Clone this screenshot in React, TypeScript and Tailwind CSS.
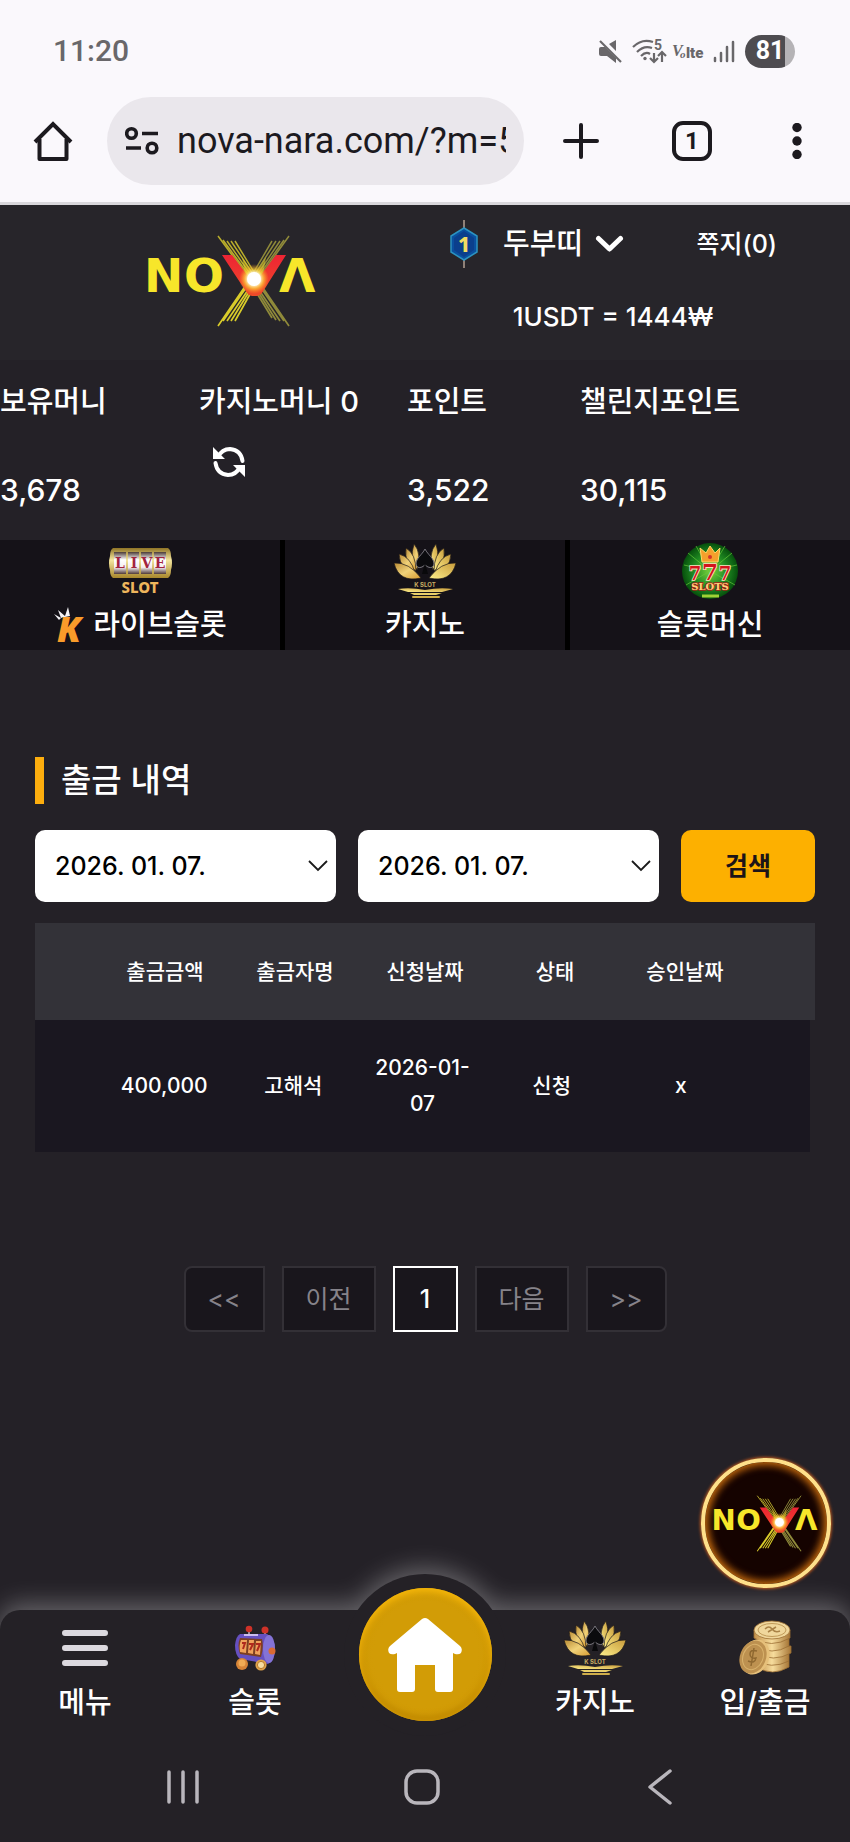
import { ReactNode } from 'react';

const pages = [
  { label: '<<', name: '처음', className: 'w-[81px] rounded-l-lg border-[#333036] text-[#86838a]' },
  { label: '이전', name: '이전', className: 'w-[94px] border-[#333036] text-[#86838a]' },
  { label: '1', name: '1', className: 'w-[65px] border-white text-white font-medium' },
  { label: '다음', name: '다음', className: 'w-[94px] border-[#333036] text-[#86838a]' },
  { label: '>>', name: '마지막', className: 'w-[81px] rounded-r-lg border-[#333036] text-[#86838a]' },
];

const columns = ['출금금액', '출금자명', '신청날짜', '상태', '승인날짜'];
const rows = [['400,000', '고해석', '2026-01-07', '신청', 'x']];

const NovaLogo = ({ className }: { className: string }) => (
  <svg className={`overflow-visible ${className}`} viewBox="0 0 170 92" role="img" aria-label="NOVA">
    <defs>
      <radialGradient id="flare">
        <stop offset="0" stopColor="#fff" />
        <stop offset="0.4" stopColor="#fffbd8" />
        <stop offset="0.65" stopColor="#ffd23a" stopOpacity="0.7" />
        <stop offset="1" stopColor="#ff9a1f" stopOpacity="0" />
      </radialGradient>
      <linearGradient id="red" x1="0" y1="0" x2="0" y2="1">
        <stop offset="0" stopColor="#ee2434" />
        <stop offset="1" stopColor="#ee4b28" />
      </linearGradient>
    </defs>
    <g fill="#f7e62a" fontFamily="DejaVu Sans" fontWeight="700" fontSize="47">
      <text x="-4" y="57">N</text>
      <text x="36" y="57">O</text>
      <text x="131" y="57">Λ</text>
    </g>
    <g stroke="#b9ad2b" strokeWidth="1.5" fill="none">
      <path d="M70 1 101 43M75 5 103 43M79 6 105 43M83 6 107 42M87 6 109 42" />
      <path d="M141 1 111 43M136 5 109 43M132 6 107 43M128 6 105 42M124 6 103 42" stroke="#8f8a3a" />
    </g>
    <g stroke="#d9cc2a" strokeWidth="1.7" fill="none">
      <path d="M70 91 98 50M75 86 100 50M79 86 102 52M83 86 104 52M87 86 106 52" />
      <path d="M141 91 113 50M136 86 111 50M132 86 109 52M128 85 107 52M124 83 105 52" stroke="#8f8a3a" />
    </g>
    <path d="M94 22 106 40 118 22 113 50H99Z" fill="#e8cf2a" opacity="0.55" />
    <path d="M74 20H84L106 49 128 20H138L114 58Q112 61 109 61H104Q101 61 99 58Z" fill="url(#red)" />
    <circle cx="106" cy="44" r="15" fill="url(#flare)" />
    <circle cx="106" cy="44" r="7" fill="#fff" />
  </svg>
);

const LotusIcon = ({ className }: { className: string }) => (
  <svg className={className} viewBox="0 0 62 56" aria-hidden="true">
    <defs>
      <linearGradient id="gold" x1="0" y1="0" x2="1" y2="1">
        <stop offset="0" stopColor="#b98a33" />
        <stop offset="0.5" stopColor="#f0d27a" />
        <stop offset="1" stopColor="#d79a2f" />
      </linearGradient>
      <linearGradient id="gold2" x1="0" y1="1" x2="1" y2="0">
        <stop offset="0" stopColor="#fff08c" />
        <stop offset="1" stopColor="#c79b3a" />
      </linearGradient>
    </defs>
    <g fill="url(#gold)" stroke="#1c1818" strokeWidth="0.7">
      <path d="M20 1Q28 10 23 27Q15 16 20 1Z" />
      <path d="M12 5Q22 11 22 28Q10 21 12 5Z" />
      <path d="M5 11Q17 14 21 30Q6 27 5 11Z" />
      <path d="M0 20Q15 19 27 35Q5 40 0 20Z" />
    </g>
    <g fill="url(#gold2)" stroke="#1c1818" strokeWidth="0.7">
      <path d="M42 1Q34 10 39 27Q47 16 42 1Z" />
      <path d="M50 5Q40 11 40 28Q52 21 50 5Z" />
      <path d="M57 11Q45 14 41 30Q56 27 57 11Z" />
      <path d="M62 20Q47 19 35 35Q57 40 62 20Z" />
    </g>
    <path d="M31 6C34 12 40 15 40 21Q39 26 34 24L31 22 28 24Q23 26 22 21C22 15 28 12 31 6Z" fill="#0b0b0e" stroke="#77757c" strokeWidth="1" />
    <path d="M31 20 28 31H34Z" fill="#09090b" />
    <text x="31" y="44" textAnchor="middle" fontFamily="Inter" fontWeight="700" fontSize="6" fill="#c9ad63">K SLOT</text>
    <path d="M4 46Q16 44 31 47 46 44 59 46L48 49H14Z" fill="url(#gold2)" />
    <path d="M16 50H48L42 52H20Z" fill="#e8cf6a" />
    <path d="M19 54H45" stroke="#cfae4a" strokeWidth="2" strokeLinecap="round" />
  </svg>
);

const LiveSlotIcon = () => (
  <svg className="h-[46px] w-[63px] overflow-visible" viewBox="0 0 63 46" aria-hidden="true">
    <defs>
      <linearGradient id="frame" x1="0" y1="0" x2="0" y2="1">
        <stop offset="0" stopColor="#8f7425" />
        <stop offset="0.4" stopColor="#f5e7a0" />
        <stop offset="1" stopColor="#a8872c" />
      </linearGradient>
      <linearGradient id="reel" x1="0" y1="0" x2="0" y2="1">
        <stop offset="0" stopColor="#4b3b37" />
        <stop offset="0.35" stopColor="#fff" />
        <stop offset="0.7" stopColor="#f4edf0" />
        <stop offset="1" stopColor="#503a38" />
      </linearGradient>
    </defs>
    <path d="M4 0H59Q62 2 62 8 64 15 62 22 62 28 59 30H4Q1 28 1 22-1 15 1 8 1 2 4 0Z" fill="url(#frame)" />
    <g fill="url(#reel)">
      <rect x="5" y="4" width="12" height="22" />
      <rect x="19" y="4" width="11" height="22" />
      <rect x="32" y="4" width="11" height="22" />
      <rect x="45" y="4" width="12" height="22" />
    </g>
    <g fill="#a3243f" fontFamily="DejaVu Serif" fontWeight="700" fontSize="14" textAnchor="middle">
      <text x="11" y="20">L</text>
      <text x="25" y="20">I</text>
      <text x="38" y="20">V</text>
      <text x="51" y="20">E</text>
    </g>
    <text x="31" y="45" textAnchor="middle" fontFamily="Noto Sans" fontWeight="800" fontSize="15" fill="#eeb55c">SLOT</text>
  </svg>
);

const KMark = () => (
  <svg className="h-9 w-9 overflow-visible" viewBox="0 0 36 36" aria-hidden="true">
    <path d="M1 7 8 11 5 3 12 9 15 0 17 9 12 10Q8 10 6 13Z" fill="#f5f3f6" />
    <text x="4" y="35" fontFamily="Noto Sans" fontStyle="italic" fontWeight="900" fontSize="36" fill="#f99b2a">K</text>
  </svg>
);

const SevensIcon = () => (
  <svg className="h-[57px] w-[57px]" viewBox="0 0 57 57" aria-hidden="true">
    <defs>
      <radialGradient id="green">
        <stop offset="0" stopColor="#7ad23c" />
        <stop offset="0.6" stopColor="#1f8a22" />
        <stop offset="1" stopColor="#064f0c" />
      </radialGradient>
    </defs>
    <circle cx="28" cy="28" r="28" fill="url(#green)" />
    <path d="M28 28 6 10M28 28 2 22M28 28 50 10M28 28 55 22M28 28 4 42M28 28 53 42M28 28 14 3M28 28 43 3" stroke="#64c83a" opacity="0.7" />
    <path d="M18 5 24 10 28 3 33 10 38 5 36 19H20Z" fill="#f5a02c" stroke="#ffd768" />
    <circle cx="28" cy="14" r="2" fill="#d4322a" />
    <g fill="#d2151c" stroke="#ffe4c4" strokeWidth="1.6" paintOrder="stroke" fontFamily="DejaVu Serif" fontWeight="700" textAnchor="middle">
      <text x="13" y="37" fontSize="18">7</text>
      <text x="43" y="37" fontSize="18">7</text>
      <text x="28" y="37" fontSize="23">7</text>
    </g>
    <text x="28" y="47" textAnchor="middle" fontFamily="DejaVu Serif" fontWeight="700" fontSize="10" fill="#ffd27a" stroke="#a3211b" strokeWidth="1.5" paintOrder="stroke">SLOTS</text>
    <path d="M20 53H37" stroke="#9fd136" strokeWidth="3" />
  </svg>
);

const SlotMachineIcon = () => (
  <svg className="h-[46px] w-[42px]" viewBox="0 0 42 46" aria-hidden="true">
    <path d="M15 4V12M31 5V12" stroke="#9a8f9d" strokeWidth="2" />
    <circle cx="15" cy="4" r="3.3" fill="#cf3228" />
    <circle cx="31" cy="5" r="3.5" fill="#cf3228" />
    <path d="M6 9H33Q41 13 41 25 40 37 34 39L6 34Q1 30 1 20 2 11 6 9Z" fill="#6650c0" />
    <ellipse cx="35" cy="24" rx="6" ry="14" fill="#8473d6" />
    <path d="M6 13 28 14Q30 22 27 32L6 29Q3 20 6 13Z" fill="#7d3f22" />
    <g fill="#f0a25c">
      <path d="M7 15H13L12 28 6 27Q5 20 7 15Z" />
      <path d="M15 15H20L19 29 14 28Z" />
      <path d="M22 16H27L26 30 21 29Z" />
    </g>
    <path d="M8 18H11L9 24M15 19H19L16 25M22 19H26L23 26" stroke="#b02a1d" strokeWidth="2" fill="none" />
    <path d="M10 10H24" stroke="#cbbcf0" strokeWidth="2" />
    <circle cx="38" cy="26" r="3.5" fill="#d96a34" />
    <circle cx="8" cy="39" r="6" fill="#d78437" />
    <circle cx="8" cy="38" r="3.5" fill="#f0ab55" />
    <circle cx="27" cy="40" r="5.6" fill="#e0a34a" />
    <circle cx="27" cy="40" r="3.6" fill="#f7dda0" stroke="#b9792b" />
  </svg>
);

const CoinsIcon = () => (
  <svg className="h-14 w-[54px]" viewBox="0 0 54 56" aria-hidden="true">
    <defs>
      <linearGradient id="coin" x1="0" y1="0" x2="1" y2="0">
        <stop offset="0" stopColor="#c4914a" />
        <stop offset="0.5" stopColor="#f6dc9c" />
        <stop offset="1" stopColor="#a87838" />
      </linearGradient>
    </defs>
    <g fill="url(#coin)" stroke="#9c6f33" strokeWidth="0.8">
      <path d="M19 41V47Q34 57 51 47V41Z" />
      <path d="M17 34V40Q33 50 51 41V34Z" />
      <path d="M18 27V33Q35 43 53 33V26Z" />
      <path d="M17 20V26Q34 36 51 26V19Z" />
      <path d="M16 10V18Q33 29 52 18V10Z" />
      <ellipse cx="34" cy="10" rx="18" ry="9" fill="#f0d79c" />
    </g>
    <ellipse cx="34" cy="10" rx="14" ry="6.5" fill="none" stroke="#c09a58" />
    <path d="M27 9Q31 5 34 9T42 11M30 12 38 7" fill="none" stroke="#a98246" strokeWidth="1.5" />
    <ellipse cx="17" cy="37" rx="14" ry="18" transform="rotate(22 17 37)" fill="#e6c07a" />
    <ellipse cx="15" cy="37" rx="13" ry="17" transform="rotate(22 15 37)" fill="#bd9150" />
    <ellipse cx="15" cy="37" rx="10" ry="13" transform="rotate(22 15 37)" fill="none" stroke="#d9b26c" />
    <path d="M19 31Q12 29 12 34T18 38Q17 44 10 41M16 28 13 46" fill="none" stroke="#8f6830" strokeWidth="1.5" />
  </svg>
);

const StatusBar = () => (
  <div className="flex items-center justify-between pt-[33px] pr-[55px] pl-[53px] text-[#69676a]">
    <span className="font-[Roboto] text-[30px] leading-9 font-medium">11:20</span>
    <div className="flex items-center gap-[6px]">
      <svg className="h-6 w-6" viewBox="0 0 24 24" aria-hidden="true">
        <path d="M11 5 18 1V12ZM1 10Q1 8 3 8H7L18 19V24L9 17H3Q1 17 1 15Z" fill="currentColor" />
        <path d="M2 2 23 23" stroke="currentColor" strokeWidth="2.2" />
      </svg>
      <svg className="ml-1 h-6 w-[34px] overflow-visible" viewBox="0 0 34 24" fill="none" stroke="currentColor" strokeWidth="2.2" aria-hidden="true">
        <path d="M1 8Q10-1 21 3M5 13Q12 6 20 9M9 17Q14 12 18 15" />
        <circle cx="13" cy="19.500" r="1.700" fill="currentColor" stroke="none" />
        <path d="M22 14V23M18 19 22 23 26 19M30 23V13M26 17 30 13 34 17" />
        <text x="22" y="11" fontFamily="Roboto" fontWeight="700" fontSize="14" fill="currentColor" stroke="none">5</text>
      </svg>
      <svg className="h-6 w-[34px] overflow-visible" viewBox="0 0 34 24" fill="currentColor" aria-hidden="true">
        <text x="0" y="17" fontFamily="Liberation Serif" fontStyle="italic" fontWeight="700" fontSize="16">V</text>
        <text x="8" y="19" fontFamily="Liberation Serif" fontStyle="italic" fontWeight="700" fontSize="11">o</text>
        <text x="14" y="19" fontFamily="Roboto" fontWeight="900" fontSize="15">lte</text>
      </svg>
      <svg className="h-6 w-6" viewBox="0 0 24 24" stroke="currentColor" strokeWidth="2.500" strokeLinecap="round" aria-hidden="true">
        <path d="M3 19V22M9 14V22M15 8V22M21 3V22" />
      </svg>
      <span className="ml-[3px] flex h-[33px] w-[50px] items-center justify-center rounded-full bg-linear-to-r from-[#4e4c50] from-80% to-[#b5b3b6] to-80% font-[Roboto] text-[25px] leading-8 font-bold text-white">
        81
      </span>
    </div>
  </div>
);

const BrowserBar = () => (
  <div className="flex items-center pt-7 pr-[35px] pb-[17px] pl-[33px] text-[#1c1a1f]">
    <button type="button" aria-label="홈">
      <svg className="h-10 w-10" viewBox="0 0 40 40" fill="none" stroke="currentColor" strokeWidth="4" strokeLinejoin="round" aria-hidden="true">
        <path d="M2 21 20 3 38 21" strokeLinejoin="miter" />
        <path d="M6.500 18V38H33.500V18" />
      </svg>
    </button>
    <div className="ml-[34px] flex h-[88px] flex-1 items-center rounded-full bg-[#eae7ec] px-[18px]">
      <svg className="h-[30px] w-[34px] shrink-0" viewBox="0 0 34 30" fill="none" stroke="currentColor" strokeWidth="3.600" aria-hidden="true">
        <circle cx="6.500" cy="7.500" r="4.800" />
        <path d="M17 7.500H33M1 22H16" />
        <circle cx="27" cy="22" r="4.800" />
      </svg>
      <input
        className="ml-[18px] w-full min-w-0 bg-transparent font-[Roboto] text-[36px] leading-10 outline-none"
        aria-label="주소"
        defaultValue="nova-nara.com/?m=5"
      />
    </div>
    <button type="button" aria-label="새 탭" className="ml-[39px]">
      <svg className="h-9 w-9" viewBox="0 0 36 36" stroke="currentColor" strokeWidth="4" strokeLinecap="round" aria-hidden="true">
        <path d="M18 2V34M2 18H34" />
      </svg>
    </button>
    <button type="button" aria-label="탭 목록" className="ml-[73px] flex size-10 items-center justify-center rounded-[11px] border-4 border-current font-[Roboto] text-[24px] leading-7 font-bold">
      1
    </button>
    <button type="button" aria-label="더보기" className="ml-[67px]">
      <svg className="h-9 w-9" viewBox="0 0 36 36" fill="currentColor" aria-hidden="true">
        <circle cx="18" cy="4.500" r="4.700" />
        <circle cx="18" cy="18" r="4.700" />
        <circle cx="18" cy="31.500" r="4.700" />
      </svg>
    </button>
  </div>
);

const SiteHeader = () => (
  <header className="flex h-[155px] justify-between bg-[#27252a] pr-[73px] pl-[148px]">
    <a href="#home" className="pt-[30px]">
      <NovaLogo className="h-[92px] w-[170px]" />
    </a>
    <div className="flex w-[328px] flex-col items-center gap-[33px] pt-[15px] font-medium">
      <div className="flex w-full items-center">
        <svg className="h-12 w-[30px]" viewBox="0 0 30 48" aria-hidden="true">
          <path d="M15 0V48" stroke="#8f8178" strokeWidth="2" />
          <path d="M15 8 28 16V32L15 40 2 32V16Z" fill="#0a4f9e" stroke="#2c93c0" strokeWidth="1.500" />
          <path d="M15 11 25 18V30L15 37 5 30V18Z" fill="#0b3f8c" />
          <text x="15" y="32" textAnchor="middle" fontFamily="Noto Sans" fontWeight="800" fontSize="21" fill="#f2dc62">1</text>
        </svg>
        <button type="button" className="ml-6 flex items-center gap-3 text-[29px] leading-9">
          두부띠
          <svg className="h-[19px] w-[29px]" viewBox="0 0 29 19" fill="none" stroke="currentColor" strokeWidth="5" strokeLinecap="round" strokeLinejoin="round" aria-hidden="true">
            <path d="M3.500 3.500 14.500 14 25.500 3.500" />
          </svg>
        </button>
        <a href="#messages" className="ml-auto text-[25px] leading-9">쪽지(0)</a>
      </div>
      <p className="text-[26px] leading-8">1USDT = 1444₩</p>
    </div>
  </header>
);

const Stat = ({ label, children }: { label: string; children: ReactNode }) => (
  <div className="whitespace-nowrap">
    <dt className="text-[29px] leading-[44px]">{label}</dt>
    <dd className="text-[30px] leading-9">{children}</dd>
  </div>
);

const Balance = () => (
  <dl className="grid h-[180px] grid-cols-[199fr_208fr_173fr_270fr] pt-5 font-medium">
    <Stat label="보유머니">
      <span className="block pt-12">3,678</span>
    </Stat>
    <Stat label="카지노머니 0">
      <button type="button" aria-label="새로고침" className="ml-[14px] block pt-[22px]">
        <svg className="h-8 w-8" viewBox="0 0 32 32" aria-hidden="true">
          <path d="M5 11Q9 3 17 3 28 4 29.500 15M27 21Q23 29 15 29 4 28 2.500 17" fill="none" stroke="currentColor" strokeWidth="4" strokeLinecap="round" />
          <path d="M0 1V13H12ZM32 31V19H20Z" fill="currentColor" />
        </svg>
      </button>
    </Stat>
    <Stat label="포인트">
      <span className="block pt-12">3,522</span>
    </Stat>
    <Stat label="챌린지포인트">
      <span className="block pt-12">30,115</span>
    </Stat>
  </dl>
);

const GameTab = ({ icon, children }: { icon: ReactNode; children: ReactNode }) => (
  <a href="#game" className="flex flex-col items-center bg-[#151218]">
    <span className="flex h-[62px] items-center">{icon}</span>
    <span className="flex h-12 items-center gap-1 pb-0.5 text-[29px] leading-10 font-medium">{children}</span>
  </a>
);

const DateSelect = ({ label }: { label: string }) => (
  <div className="grid">
    <select
      aria-label={label}
      className="col-start-1 row-start-1 h-[72px] w-full appearance-none rounded-[10px] bg-white px-5 text-[25px] leading-8 font-medium text-black"
    >
      <option>2026. 01. 07.</option>
    </select>
    <svg className="pointer-events-none col-start-1 row-start-1 mr-2 h-3 w-5 self-center justify-self-end" viewBox="0 0 20 12" fill="none" stroke="#1a1a1a" strokeWidth="1.800" aria-hidden="true">
      <path d="M1 1 10 10 19 1" />
    </svg>
  </div>
);

const HistoryTable = () => (
  <table className="mt-[21px] block text-[21px] font-medium">
    <thead className="block">
      <tr className="grid h-[97px] grid-cols-12 items-center bg-[#333238]">
        <td></td>
        {columns.map((column) => (
          <th key={column} scope="col" className="col-span-2 text-center leading-9 font-medium">{column}</th>
        ))}
      </tr>
    </thead>
    <tbody className="mr-[5px] block">
      {rows.map((row) => (
        <tr key={row[0]} className="grid grid-cols-12 items-center bg-[#1a1720] py-[30px]">
          <td></td>
          {row.map((cell) => (
            <td key={cell} className="col-span-2 px-3 text-center leading-9">{cell}</td>
          ))}
        </tr>
      ))}
    </tbody>
  </table>
);

const NavItem = ({ icon, label }: { icon: ReactNode; label: string }) => (
  <a href="#nav" className="flex flex-col items-center">
    <span className="flex h-[76px] items-center">{icon}</span>
    <span className="text-[29px] leading-[34px] font-medium">{label}</span>
  </a>
);

const BottomNav = () => (
  <div className="relative">
    <div className="absolute inset-0 drop-shadow-[0_-6px_12px_rgba(255,255,255,0.3)]">
      <div className="absolute -top-9 left-1/2 size-[162px] -translate-x-1/2 rounded-full bg-[#242126]"></div>
      <div className="h-full rounded-t-[20px] bg-[#242126]"></div>
    </div>
    <a
      href="#nova"
      className="absolute right-[19px] bottom-full mb-[22px] flex size-[130px] items-center justify-center rounded-full border-4 border-[#ffe08a] bg-[radial-gradient(circle,#150300_60%,#7a3200_100%)] shadow-[0_0_3px_1px_#c05a1e,inset_0_0_8px_2px_#d9780f]"
    >
      <NovaLogo className="h-[57px] w-[105px] shrink-0" />
    </a>
    <nav className="relative grid h-[150px] grid-cols-5">
      <NavItem
        label="메뉴"
        icon={
          <svg className="h-[38px] w-[46px]" viewBox="0 0 46 38" stroke="#dcd9df" strokeWidth="6" strokeLinecap="round" aria-hidden="true">
            <path d="M3 4H43M3 19H43M3 34H43" />
          </svg>
        }
      />
      <NavItem label="슬롯" icon={<SlotMachineIcon />} />
      <a
        href="#home"
        aria-label="홈"
        className="-mt-[22px] flex size-[133px] items-center justify-center justify-self-center rounded-full bg-[radial-gradient(circle,#d29c06_55%,#cf9704_100%)] shadow-[inset_0_3px_6px_1px_#f5b70a,inset_0_-3px_6px_1px_#b98300]"
      >
        <svg className="h-[76px] w-[76px]" viewBox="0 0 76 76" fill="#fff" aria-hidden="true">
          <path d="M35 2Q38 0 41 2L73 29Q76 32 74 36 72 38 68 37L66 36V72Q66 75 63 75H51Q48 75 48 72V48H28V72Q28 75 25 75H13Q10 75 10 72V36L8 37Q4 38 2 36 0 32 3 29Z" />
        </svg>
      </a>
      <NavItem label="카지노" icon={<LotusIcon className="h-14 w-[62px]" />} />
      <NavItem label="입/출금" icon={<CoinsIcon />} />
    </nav>
    <div className="relative flex h-[82px] items-start justify-between pt-[9px] pr-[172px] pl-[165px] text-[#b9b6bc]">
      <button type="button" aria-label="최근 앱">
        <svg className="h-9 w-9" viewBox="0 0 36 36" stroke="currentColor" strokeWidth="3.500" strokeLinecap="round" aria-hidden="true">
          <path d="M4 3V33M18 3V33M32 3V33" />
        </svg>
      </button>
      <button type="button" aria-label="홈 화면">
        <svg className="h-9 w-9" viewBox="0 0 36 36" fill="none" stroke="currentColor" strokeWidth="3.500" aria-hidden="true">
          <rect x="2" y="2" width="32" height="32" rx="11" />
        </svg>
      </button>
      <button type="button" aria-label="뒤로">
        <svg className="h-9 w-9" viewBox="0 0 36 36" fill="none" stroke="currentColor" strokeWidth="3.500" strokeLinecap="round" strokeLinejoin="round" aria-hidden="true">
          <path d="M28 2 8 18 28 34" />
        </svg>
      </button>
    </div>
  </div>
);

export default function App() {
  return (
    <div className="flex min-h-screen flex-col bg-[#242127] font-['Inter','Noto_Sans_CJK_KR',sans-serif] text-white">
      <div className="border-b-[3px] border-[#d9d7db] bg-[#faf8fc]">
        <StatusBar />
        <BrowserBar />
      </div>
      <SiteHeader />
      <Balance />
      <nav className="grid grid-cols-3 gap-[5px] bg-black">
        <GameTab icon={<LiveSlotIcon />}>
          <KMark />
          라이브슬롯
        </GameTab>
        <GameTab icon={<LotusIcon className="h-14 w-[62px]" />}>카지노</GameTab>
        <GameTab icon={<SevensIcon />}>슬롯머신</GameTab>
      </nav>

      <main className="flex-1 px-[35px] pt-[107px]">
        <h1 className="flex h-[47px] items-center border-l-[9px] border-[#fdae0e] pl-[17px] text-[33px] leading-[47px] font-medium">
          출금 내역
        </h1>
        <form className="mt-[26px] grid grid-cols-[9fr_9fr_4fr] gap-[22px]">
          <DateSelect label="시작일" />
          <DateSelect label="종료일" />
          <button type="button" className="rounded-[10px] bg-[#fdb000] text-[25px] leading-8 font-bold text-[#1c1418]">
            검색
          </button>
        </form>
        <HistoryTable />
        <nav aria-label="페이지" className="mt-[114px] flex justify-center gap-[17px]">
          {pages.map((page) => (
            <button key={page.name} type="button" className={`h-[66px] border-2 bg-[#19161c] text-[25px] leading-8 ${page.className}`}>
              {page.label}
            </button>
          ))}
        </nav>
      </main>

      <BottomNav />
    </div>
  );
}
